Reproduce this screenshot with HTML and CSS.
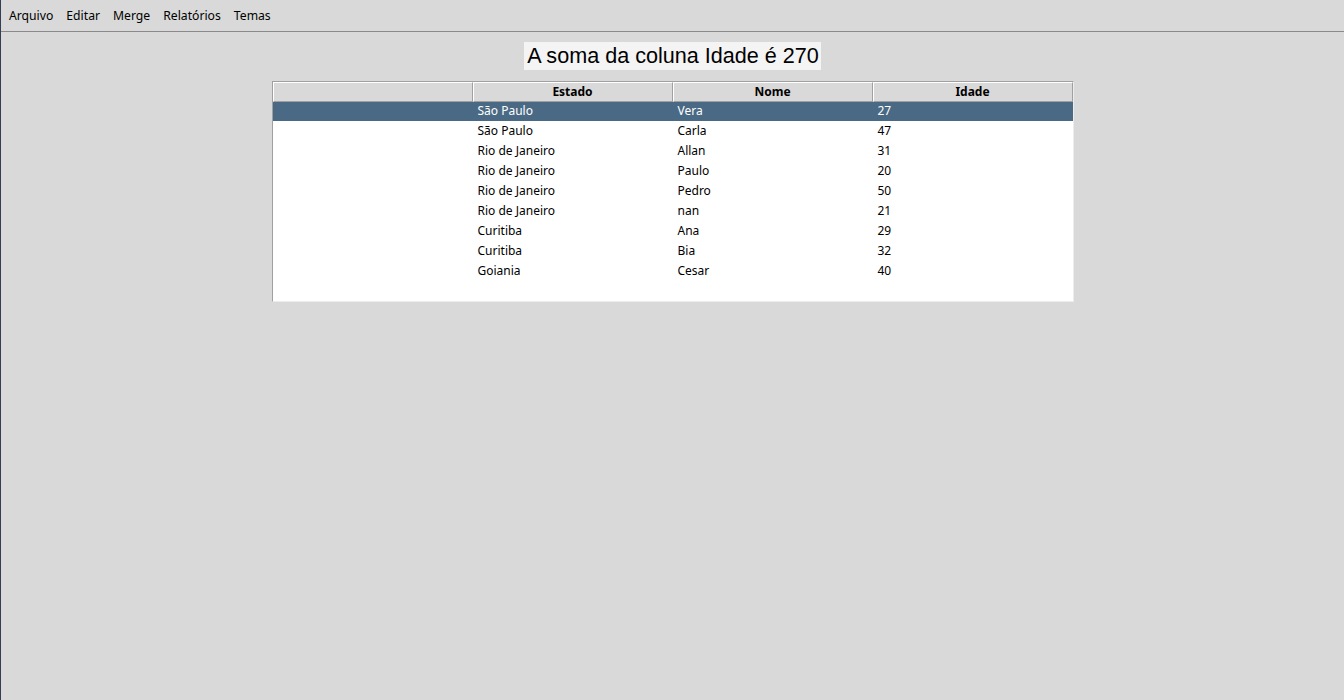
FILE: index.html
```html
<!DOCTYPE html>
<html lang="pt">
<head>
<meta charset="utf-8">
<title>Tabela</title>
<link rel="stylesheet" href="styles.css">
</head>
<body>
<div class="app">
  <nav class="menubar">
    <span class="menu-item">Arquivo</span>
    <span class="menu-item">Editar</span>
    <span class="menu-item">Merge</span>
    <span class="menu-item">Relatórios</span>
    <span class="menu-item">Temas</span>
  </nav>
  <main class="content">
    <div class="title">A soma da coluna Idade é 270</div>
    <div class="table">
      <div class="row head">
        <div class="hcell"></div>
        <div class="hcell">Estado</div>
        <div class="hcell">Nome</div>
        <div class="hcell">Idade</div>
      </div>
      <div class="row selected"><div class="cell"></div><div class="cell">São Paulo</div><div class="cell">Vera</div><div class="cell">27</div></div>
      <div class="row"><div class="cell"></div><div class="cell">São Paulo</div><div class="cell">Carla</div><div class="cell">47</div></div>
      <div class="row"><div class="cell"></div><div class="cell">Rio de Janeiro</div><div class="cell">Allan</div><div class="cell">31</div></div>
      <div class="row"><div class="cell"></div><div class="cell">Rio de Janeiro</div><div class="cell">Paulo</div><div class="cell">20</div></div>
      <div class="row"><div class="cell"></div><div class="cell">Rio de Janeiro</div><div class="cell">Pedro</div><div class="cell">50</div></div>
      <div class="row"><div class="cell"></div><div class="cell">Rio de Janeiro</div><div class="cell">nan</div><div class="cell">21</div></div>
      <div class="row"><div class="cell"></div><div class="cell">Curitiba</div><div class="cell">Ana</div><div class="cell">29</div></div>
      <div class="row"><div class="cell"></div><div class="cell">Curitiba</div><div class="cell">Bia</div><div class="cell">32</div></div>
      <div class="row"><div class="cell"></div><div class="cell">Goiania</div><div class="cell">Cesar</div><div class="cell">40</div></div>
      <div class="filler"></div>
    </div>
  </main>
</div>
</body>
</html>
```

FILE: styles.css
```css
* { box-sizing: border-box; }
html, body { margin: 0; padding: 0; height: 100%; }
body {
  background: #d9d9d9;
  font-family: "Noto Sans", "Open Sans", sans-serif;
  font-size: 12px;
  color: #000;
}
.app {
  min-height: 700px;
  border-left: 1px solid #353e55;
}
.menubar {
  display: flex;
  align-items: center;
  height: 32px;
  padding-left: 8px;
  gap: 13px;
  border-bottom: 1px solid #8a8a8a;
  font-size: 12.2px;
}
.menu-item { line-height: 16px; }
.content {
  display: flex;
  flex-direction: column;
  align-items: center;
  padding-top: 10px;
}
.title {
  background: #f4f4f4;
  font-family: "Liberation Sans", Arial, sans-serif;
  font-size: 21.6px;
  line-height: 28px;
  height: 28px;
  padding: 0 2px 0 3px;
  margin-bottom: 11px;
}
.table {
  width: 802px;
  background: #fff;
  border: 1px solid;
  border-color: #a0a0a0 #ececec #ececec #a0a0a0;
}
.row {
  display: grid;
  grid-template-columns: repeat(4, 200px);
  height: 20px;
}
.row.head { height: 19px; background: #d9d9d9; }
.hcell {
  border-top: 1px solid #fff;
  border-left: 1px solid #fff;
  border-right: 1px solid #a0a0a0;
  border-bottom: 1px solid #a0a0a0;
  font-weight: bold;
  text-align: center;
  line-height: 18px;
}
.cell {
  padding-left: 5px;
  line-height: 20px;
  white-space: nowrap;
}
.row.selected { background: #4a6984; color: #fff; }
.filler { height: 20px; }
```
